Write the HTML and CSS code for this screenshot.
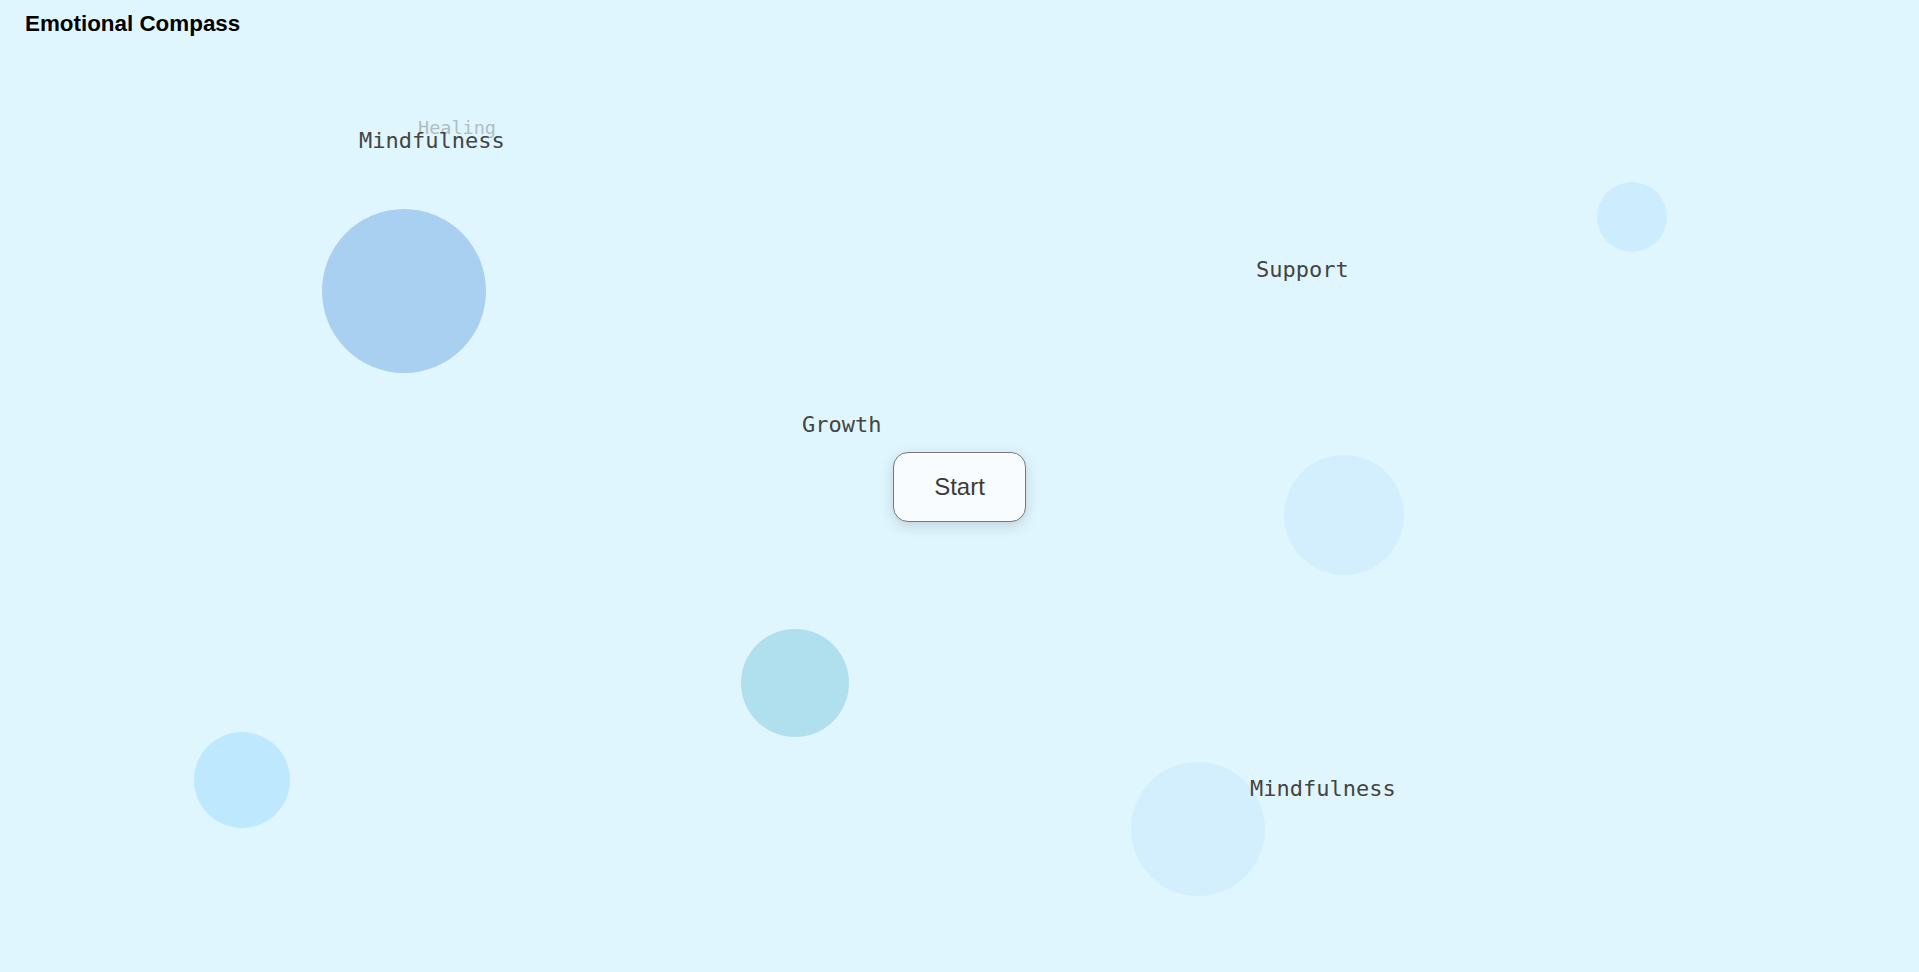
FILE: index.html
```html
<!DOCTYPE html>
<html lang="en">
<head>
<meta charset="utf-8">
<title>Emotional Compass</title>
<link rel="stylesheet" href="styles.css">
</head>
<body>
<main class="stage">
  <h1 class="title">Emotional Compass</h1>

  <div class="bubble bubble-a"></div>
  <div class="bubble bubble-b"></div>
  <div class="bubble bubble-c"></div>
  <div class="bubble bubble-d"></div>
  <div class="bubble bubble-e"></div>
  <div class="bubble bubble-f"></div>

  <span class="word word-healing">Healing</span>
  <span class="word word-mind1">Mindfulness</span>
  <span class="word word-support">Support</span>
  <span class="word word-growth">Growth</span>
  <span class="word word-mind2">Mindfulness</span>

  <button class="start-btn" type="button">Start</button>
</main>
</body>
</html>
```

FILE: styles.css
```css
html, body {
  margin: 0;
  padding: 0;
  height: 100%;
  overflow: hidden;
}

body {
  background: #e0f6fe;
  font-family: "Liberation Sans", Arial, sans-serif;
}

.stage {
  position: relative;
  box-sizing: border-box;
  height: 100vh;
  padding-top: 2px;
  display: flex;
  align-items: center;
  justify-content: center;
}

.title {
  position: absolute;
  top: 11px;
  left: 25px;
  margin: 0;
  font-size: 22.4px;
  font-weight: bold;
  color: #000;
  line-height: normal;
}

.bubble {
  position: absolute;
  border-radius: 50%;
}

.bubble-a { left: 322px; top: 209px; width: 164px; height: 164px; background: #a9d0f0; }
.bubble-b { left: 1597px; top: 182px; width: 70px; height: 70px; background: #cdedfe; }
.bubble-c { left: 1284px; top: 455px; width: 120px; height: 120px; background: #d3effd; }
.bubble-d { left: 741px; top: 629px; width: 108px; height: 108px; background: #b0dfee; }
.bubble-e { left: 194px; top: 732px; width: 96px; height: 96px; background: #bde8fd; }
.bubble-f { left: 1131px; top: 762px; width: 134px; height: 134px; background: #d3effd; }

.word {
  position: absolute;
  font-family: "DejaVu Sans Mono", monospace;
  font-size: 22px;
  line-height: normal;
  color: #444;
  white-space: nowrap;
}

.word-healing { left: 418px; top: 117px; font-size: 18.5px; color: #aebec4; }
.word-mind1 { left: 359px; top: 128px; }
.word-support { left: 1256px; top: 257px; }
.word-growth { left: 802px; top: 412px; }
.word-mind2 { left: 1250px; top: 776px; }

.start-btn {
  position: relative;
  z-index: 2;
  font-family: "Liberation Sans", Arial, sans-serif;
  font-size: 24px;
  color: #3a3a3a;
  padding: 20px 40px;
  background: #f8fcff;
  border: 1px solid #777;
  border-radius: 15px;
  box-shadow: 0 4px 14px rgba(0, 0, 0, 0.15);
  cursor: pointer;
  line-height: normal;
}
```
